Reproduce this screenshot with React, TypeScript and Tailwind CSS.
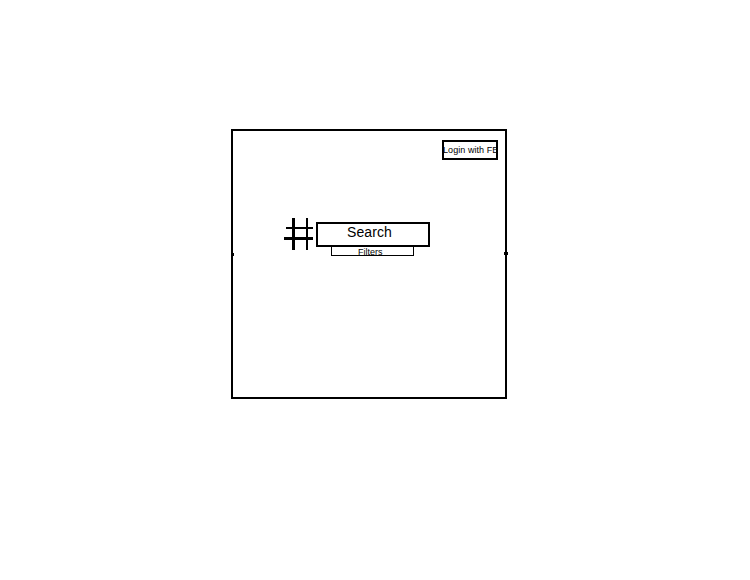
function HashIcon() {
  return (
    <svg className="mt-[-4px] h-8 w-[29px] shrink-0" viewBox="0 0 29 32" shapeRendering="crispEdges" fill="black">
      <rect x="8" y="0" width="3" height="32" />
      <rect x="22" y="0" width="2" height="32" />
      <rect x="2" y="9" width="27" height="2" />
      <rect x="0" y="19" width="29" height="3" />
    </svg>
  );
}

export default function App() {
  return (
    <div className="flex h-[580px] w-[750px] items-start bg-white pt-[129px] pl-[231px] font-['Liberation_Sans',Arial,sans-serif] text-black">
      <main className="relative flex h-[270px] w-[276px] flex-col border-2 border-black">
        <span className="absolute top-[122px] left-0 h-[3px] w-px bg-black" />
        <span className="absolute top-[121px] right-[-3px] h-[3px] w-1 bg-black" />
        <header className="flex justify-end pt-[9px] pr-[7px]">
          <button className="flex h-5 w-14 items-center overflow-hidden border-2 border-black text-[9px] leading-4 tracking-[0.06px] whitespace-nowrap">
            <span className="-ml-px">Login with FB</span>
          </button>
        </header>
        <section className="mt-[62px] flex items-start pl-[51px]">
          <HashIcon />
          <div className="ml-[3px] w-[114px]">
            <div className="h-[25px] border-2 border-black pl-[29px] text-[14px] leading-4 tracking-[0.1px]">
              Search
            </div>
            <div className="ml-[15px] h-[9px] w-[83px] border border-t-0 border-black pl-[26px] text-[9px] leading-[11px]">
              Filters
            </div>
          </div>
        </section>
      </main>
    </div>
  );
}
